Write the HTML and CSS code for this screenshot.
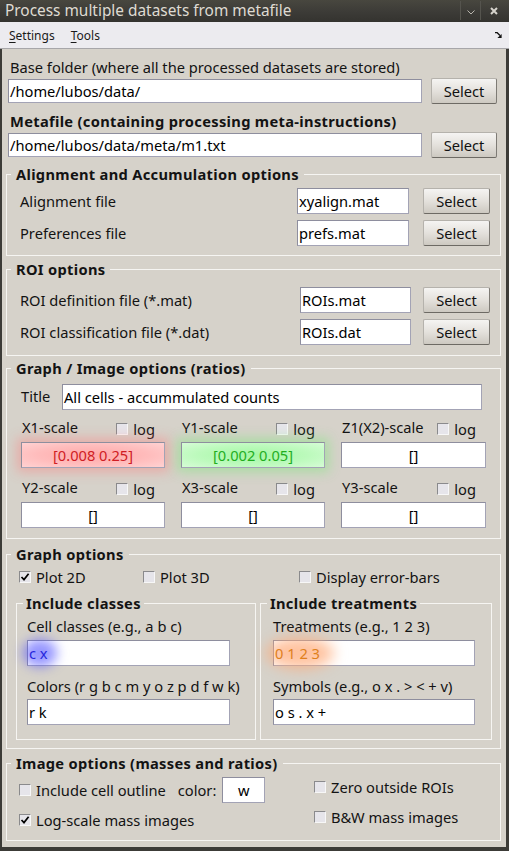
FILE: index.html
```html
<!DOCTYPE html>
<html>
<head>
<meta charset="utf-8">
<title>Process multiple datasets from metafile</title>
<link rel="stylesheet" href="styles.css">
</head>
<body>
<div class="window">
  <div class="titlebar">
    <div class="title">Process multiple datasets from metafile</div>
    <div class="tb-controls">
      <span class="tb-sep"></span>
      <span class="tb-btn tb-min"><svg width="8" height="5" viewBox="0 0 8 5"><path d="M0.5 0.5L4 4L7.5 0.5" fill="none" stroke="#b9b6ae" stroke-width="1"/></svg></span>
      <span class="tb-sep"></span>
      <span class="tb-btn tb-close"><svg width="8" height="8" viewBox="0 0 8 8"><path d="M1 1L7 7M7 1L1 7" stroke="#d6d3cc" stroke-width="2"/></svg></span>
    </div>
  </div>
  <div class="menubar">
    <span class="menu"><u>S</u>ettings</span>
    <span class="menu"><u>T</u>ools</span>
    <span class="undock"><svg width="7" height="6" viewBox="0 0 7 6"><path d="M0 0.7H2.2L5 3.5" fill="none" stroke="#111" stroke-width="1.3"/><path d="M6.6 1.9V6H2.4Z" fill="#111"/></svg></span>
  </div>
  <div class="frame">
    <div class="label l-base">Base folder (where all the processed datasets are stored)</div>
    <div class="toprow"><div class="field ftop">/home/lubos/data/</div><div class="btn btop">Select</div></div>
    <div class="label bold l-meta">Metafile (containing processing meta-instructions)</div>
    <div class="toprow"><div class="field ftop">/home/lubos/data/meta/m1.txt</div><div class="btn btop">Select</div></div>

    <fieldset class="group g-align">
      <legend>Alignment and Accumulation options</legend>
      <div class="frow"><span class="flabel">Alignment file</span><div class="field f-align">xyalign.mat</div><div class="btn">Select</div></div>
      <div class="frow r2"><span class="flabel">Preferences file</span><div class="field f-align">prefs.mat</div><div class="btn">Select</div></div>
    </fieldset>

    <fieldset class="group g-roi">
      <legend>ROI options</legend>
      <div class="frow"><span class="flabel">ROI definition file (*.mat)</span><div class="field f-roi">ROIs.mat</div><div class="btn">Select</div></div>
      <div class="frow r2"><span class="flabel">ROI classification file (*.dat)</span><div class="field f-roi">ROIs.dat</div><div class="btn">Select</div></div>
    </fieldset>

    <fieldset class="group g-graphimg">
      <legend>Graph / Image options (ratios)</legend>
      <div class="titlerow"><span class="tlabel">Title</span><div class="field f-title">All cells - accummulated counts</div></div>
      <div class="scales">
        <div class="scale">
          <div class="shead"><span class="slabel">X1-scale</span><span class="chk"><span class="cb"></span>log</span></div>
          <div class="field f-scale glow-red">[0.008 0.25]</div>
        </div>
        <div class="scale">
          <div class="shead"><span class="slabel">Y1-scale</span><span class="chk"><span class="cb"></span>log</span></div>
          <div class="field f-scale glow-green">[0.002 0.05]</div>
        </div>
        <div class="scale">
          <div class="shead"><span class="slabel">Z1(X2)-scale</span><span class="chk"><span class="cb"></span>log</span></div>
          <div class="field f-scale">[]</div>
        </div>
        <div class="scale row2">
          <div class="shead"><span class="slabel">Y2-scale</span><span class="chk"><span class="cb"></span>log</span></div>
          <div class="field f-scale">[]</div>
        </div>
        <div class="scale row2">
          <div class="shead"><span class="slabel">X3-scale</span><span class="chk"><span class="cb"></span>log</span></div>
          <div class="field f-scale">[]</div>
        </div>
        <div class="scale row2">
          <div class="shead"><span class="slabel">Y3-scale</span><span class="chk"><span class="cb"></span>log</span></div>
          <div class="field f-scale">[]</div>
        </div>
      </div>
    </fieldset>

    <fieldset class="group g-graph">
      <legend>Graph options</legend>
      <div class="plotrow">
        <span class="chk"><span class="cb checked"><svg width="10" height="10" viewBox="0 0 10 10"><path d="M1.5 5L4 7.6L8.6 1.8" fill="none" stroke="#000" stroke-width="1.7"/></svg></span>Plot 2D</span>
        <span class="chk"><span class="cb"></span>Plot 3D</span>
        <span class="chk"><span class="cb"></span>Display error-bars</span>
      </div>
      <div class="subs">
        <fieldset class="sub sub-classes">
          <legend>Include classes</legend>
          <div class="sublabel">Cell classes (e.g., a b c)</div>
          <div class="field f-sub"><span class="glow glow-blue">c x</span></div>
          <div class="sublabel s2">Colors (r g b c m y o z p d f w k)</div>
          <div class="field f-sub">r k</div>
        </fieldset>
        <fieldset class="sub sub-treat">
          <legend>Include treatments</legend>
          <div class="sublabel">Treatments (e.g., 1 2 3)</div>
          <div class="field f-sub"><span class="glow glow-orange">0 1 2 3</span></div>
          <div class="sublabel s2">Symbols (e.g., o x . &gt; &lt; + v)</div>
          <div class="field f-sub">o s . x +</div>
        </fieldset>
      </div>
    </fieldset>

    <fieldset class="group g-image">
      <legend>Image options (masses and ratios)</legend>
      <div class="imgcols">
        <div class="imgcol left">
          <div class="irow1">
            <span class="chk"><span class="cb"></span>Include cell outline</span>
            <span class="colorlbl">color:</span>
            <div class="field f-color">w</div>
          </div>
          <div class="irow2">
            <span class="chk"><span class="cb checked"><svg width="10" height="10" viewBox="0 0 10 10"><path d="M1.5 5L4 7.6L8.6 1.8" fill="none" stroke="#000" stroke-width="1.7"/></svg></span>Log-scale mass images</span>
          </div>
        </div>
        <div class="imgcol right">
          <div class="jrow1"><span class="chk"><span class="cb"></span>Zero outside ROIs</span></div>
          <div class="jrow2"><span class="chk"><span class="cb"></span>B&amp;W mass images</span></div>
        </div>
      </div>
    </fieldset>
  </div>
</div>
</body>
</html>
```

FILE: styles.css
```css
* { box-sizing: border-box; }
html, body { margin: 0; padding: 0; }
body {
  width: 509px;
  height: 851px;
  overflow: hidden;
  background: #3c3b37;
  font-family: "Noto Sans", "DejaVu Sans", sans-serif;
  font-size: 14.67px;
  color: #131313;
}
.window { width: 509px; height: 851px; display: flex; flex-direction: column; }

/* title bar */
.titlebar {
  height: 22px;
  flex: none;
  display: flex;
  background: linear-gradient(#48473f, #3c3b37 55%, #34332f);
  color: #dfdbd2;
}
.title { flex: 1; padding-left: 5px; font-size: 15.4px; line-height: 22px; white-space: nowrap; }
.tb-controls { display: flex; padding-right: 3px; }
.tb-sep { width: 1px; margin: 1px 0 2px; background: #55544e; }
.tb-btn { display: flex; align-items: center; justify-content: center; }
.tb-min { width: 19px; padding-top: 2px; }
.tb-close { width: 25px; }

/* menu bar */
.menubar {
  height: 27px;
  flex: none;
  display: flex;
  align-items: center;
  padding-left: 9px;
  background: #ecebef;
  border-bottom: 1px solid #a7a6a9;
  font-size: 12px;
  color: #1a1a1a;
}
.menu { margin-right: 16px; }
.menu u { text-underline-offset: 2px; }
.undock { margin-left: auto; margin-right: 7px; display: flex; }

/* main frame */
.frame {
  flex: 1;
  display: flex;
  flex-direction: column;
  background: #d6d2ca;
  border-style: solid;
  border-color: #3c3b37;
  border-width: 0 3px 4px 2px;
  padding-top: 9px;
}
.label { line-height: 18px; margin-left: 8px; white-space: nowrap; }
.bold { font-weight: 700; letter-spacing: 0.32px; }
.l-meta { margin-top: 8px; }
.toprow {
  display: flex;
  align-items: center;
  gap: 9px;
  height: 26px;
  margin: 2px 9px 0 6px;
}

.field {
  position: relative;
  z-index: 0;
  height: 26px;
  background: #fff;
  border: 1px solid #a3a3b5;
  border-top-color: #8e8e9e;
  border-left-color: #8e8e9e;
  line-height: 18px;
  padding: 3px 1px;
  white-space: nowrap;
  overflow: visible;
  color: #000;
}
.ftop { flex: 1; height: 24px; padding: 2px 1px; }

.btn {
  width: 67px;
  height: 26px;
  flex: none;
  display: flex;
  align-items: center;
  justify-content: center;
  line-height: 18px;
  border: 1px solid;
  border-color: #b5b2ac #7e7b75 #6d6a64 #b5b2ac;
  border-radius: 2px;
  background: linear-gradient(#f5f4f2, #e4e1dc 50%, #cdc9c1);
  color: #111;
}
.btop { width: 66px; }

/* group boxes */
fieldset { min-width: 0; margin: 0; }
.group {
  margin: 0 5px 0 4px;
  padding: 0 10px 0 4px;
  border: 1px solid #f6f5f2;
}
legend {
  padding: 0 5px;
  font-weight: 700;
  letter-spacing: 0.32px;
  line-height: 19px;
  white-space: nowrap;
}
.sub legend { padding: 0 3px; }
.g-align { margin-top: 7px; padding-top: 4px; padding-bottom: 9px; }
.g-roi { margin-top: 4px; padding-top: 8px; padding-bottom: 10px; }
.g-graphimg { margin-top: 3px; padding-top: 6px; padding-bottom: 10px; }
.g-graph { margin-top: 6px; padding-top: 4px; padding-bottom: 8px; padding-right: 8px; }
.g-image { margin-top: 5px; padding-top: 4px; padding-bottom: 11px; }

.frow { display: flex; align-items: center; height: 26px; }
.frow.r2 { margin-top: 6px; }
.flabel { flex: 1; margin-left: 9px; line-height: 18px; white-space: nowrap; }
.f-align { width: 112px; margin-right: 14px; }
.f-roi { width: 111px; margin-right: 12px; }

/* graph / image options */
.titlerow { display: flex; align-items: center; height: 26px; }
.tlabel { margin-left: 10px; width: 41px; line-height: 18px; margin-bottom: 3px; }
.f-title { width: 420px; }
.scales {
  display: grid;
  grid-template-columns: 144px 144px 145px;
  column-gap: 16px;
  margin-left: 10px;
  margin-top: 8px;
}
.scale.row2 { margin-top: 10px; }
.shead { display: flex; height: 24px; padding-right: 10px; }
.slabel { line-height: 18px; margin-left: 1px; white-space: nowrap; }
.shead .chk { margin-left: auto; margin-top: 2px; align-self: flex-start; }
.f-scale { text-align: center; }

.chk { display: inline-flex; align-items: center; gap: 5px; line-height: 18px; white-space: nowrap; }
.cb {
  width: 12px;
  height: 12px;
  flex: none;
  display: inline-flex;
  align-items: center;
  justify-content: center;
  border: 1px solid;
  border-color: #8a8a8c #f7f7f7 #f7f7f7 #8a8a8c;
  background: #e6e5ea;
}

.glow-red {
  color: #d01c24;
  background: radial-gradient(ellipse at center, #ffa8a8 0%, #ffbcbc 55%, #ffd2d2 100%);
  box-shadow: 0 0 12px 4px rgba(255, 120, 120, 0.42);
}
.glow-green {
  color: #1fae1f;
  background: radial-gradient(ellipse at center, #a4f7a4 0%, #bcfabc 55%, #d6fcd6 100%);
  box-shadow: 0 0 12px 4px rgba(110, 235, 110, 0.42);
}

/* graph options */
.plotrow {
  display: grid;
  grid-template-columns: 124px 156px auto;
  margin-left: 8px;
  height: 18px;
}
.subs {
  display: grid;
  grid-template-columns: 240px 232px;
  column-gap: 4px;
  margin-top: 8px;
  margin-left: 5px;
}
.sub {
  border: 1px solid #f6f5f2;
  padding: 4px 0 14px 6px;
}
.sublabel { line-height: 18px; white-space: nowrap; }
.sub-classes .sublabel, .sub-classes .f-sub { margin-left: 4px; }
.sub-treat .sublabel, .sub-treat .f-sub { margin-left: 6px; }
.sublabel.s2 { margin-top: 11px; }
.f-sub { margin-top: 5px; }
.sub-classes .f-sub { width: 203px; }
.sub-treat .f-sub { width: 202px; }
.sublabel.s2 + .f-sub { margin-top: 4px; }

.glow { position: relative; display: inline-block; }
.glow::before {
  content: "";
  position: absolute;
  z-index: -1;
  border-radius: 50%;
}
.glow-blue { color: #2626dc; }
.glow-blue::before {
  left: -6px; right: -9px; top: -5px; bottom: -5px;
  background: rgba(80, 80, 255, 0.6);
  filter: blur(6px);
}
.glow-orange { color: #e0801c; }
.glow-orange::before {
  left: -9px; right: -14px; top: -7px; bottom: -7px;
  background: rgba(255, 170, 120, 0.7);
  filter: blur(7px);
}

/* image options */
.imgcols { display: grid; grid-template-columns: 295px auto; margin-left: 8px; }
.irow1 { display: flex; align-items: center; height: 26px; }
.colorlbl { margin-left: 12px; line-height: 18px; }
.f-color { width: 43px; margin-left: 6px; text-align: center; }
.irow2 { margin-top: 8px; height: 18px; display: flex; }
.jrow1 { margin-top: 1px; height: 18px; display: flex; }
.jrow2 { margin-top: 12px; height: 18px; display: flex; }
```
